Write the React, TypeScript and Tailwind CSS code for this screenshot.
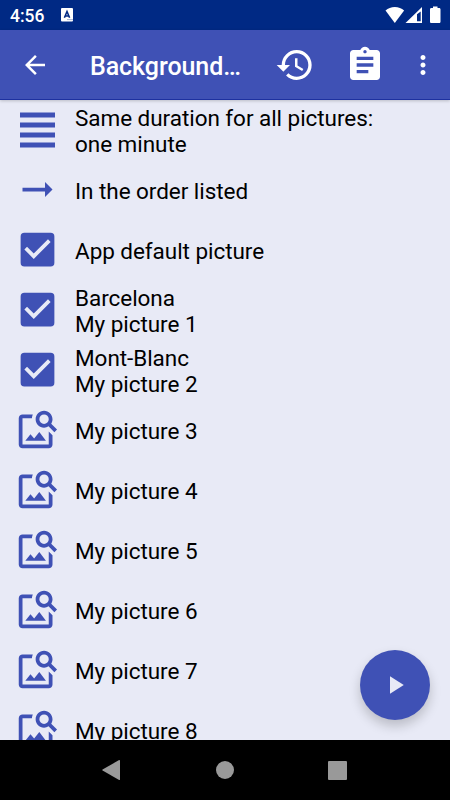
import type { ReactNode } from "react";
import {
  MdArrowBack,
  MdArrowRightAlt,
  MdAssignment,
  MdCheckBox,
  MdHistory,
  MdImageSearch,
  MdMoreVert,
  MdPlayArrow,
} from "react-icons/md";

interface Item {
  icon: ReactNode;
  lines: string[];
}

function DurationIcon() {
  return (
    <svg width="45" height="45" viewBox="0 0 45 45" fill="currentColor">
      <path d="M5 5.500h35v5H5zM5 15.500h35v5H5zM5 25.500h35v5H5zM5 35.500h35v5H5z" />
    </svg>
  );
}

const checked = <MdCheckBox size={45} />;
const search = <MdImageSearch size={45} />;

const items: Item[] = [
  {
    icon: <DurationIcon />,
    lines: ["Same duration for all pictures:", "one minute"],
  },
  { icon: <MdArrowRightAlt size={45} />, lines: ["In the order listed"] },
  { icon: checked, lines: ["App default picture"] },
  { icon: checked, lines: ["Barcelona", "My picture 1"] },
  { icon: checked, lines: ["Mont-Blanc", "My picture 2"] },
  { icon: search, lines: ["My picture 3"] },
  { icon: search, lines: ["My picture 4"] },
  { icon: search, lines: ["My picture 5"] },
  { icon: search, lines: ["My picture 6"] },
  { icon: search, lines: ["My picture 7"] },
  { icon: search, lines: ["My picture 8"] },
];

function StatusBar() {
  return (
    <div className="h-[30px] shrink-0 bg-[#002984] flex items-center pl-[10px] pr-[9px] text-white">
      <span className="text-[17.5px] font-medium leading-[30px] pt-px">4:56</span>
      <svg className="ml-[17px]" width="12" height="14" viewBox="0 0 12 14">
        <rect width="12" height="13.500" rx="1" fill="white" />
        <path
          d="M3.400 9.800 6 3.500 8.600 9.800M4.300 8H7.700"
          fill="none"
          stroke="#002984"
          strokeWidth="1.6"
        />
        <path d="M6.500 11.600h5" stroke="#002984" strokeDasharray="1 1" strokeWidth="0.700" />
      </svg>
      <svg className="ml-auto" width="56" height="18" viewBox="0 0 56 18" fill="white">
        <path d="M9.800 17 .5 4.600C3 2.300 6.200 1 9.800 1s6.800 1.300 9.300 3.600z" />
        <path
          fillRule="evenodd"
          d="M37 1v16H20.500zM35.700 5.500v9.700H32V8.300z"
        />
        <path d="M48 .5h4.500V2h1.700c.7 0 1.300.6 1.300 1.300v12.400c0 .7-.6 1.300-1.300 1.300h-7.900c-.7 0-1.300-.6-1.300-1.300V3.300c0-.7.6-1.300 1.300-1.300H48z" />
      </svg>
    </div>
  );
}

function Toolbar() {
  return (
    <header className="relative z-10 h-[70px] shrink-0 bg-[#3f51b5] shadow-[inset_0_-1px_0_#1d31a0,0_1px_3px_rgba(0,0,0,0.2)] flex items-center pl-5 text-white">
      <button aria-label="Back">
        <MdArrowBack size={30} />
      </button>
      <h1 className="ml-10 w-[152px] pt-[3px] text-[25px] leading-[30px] font-medium tracking-[-0.07px] whitespace-nowrap">
        Background…
      </h1>
      <button aria-label="History" className="ml-[33px]">
        <MdHistory size={40} />
      </button>
      <button aria-label="Clipboard" className="ml-[30px]">
        <MdAssignment size={40} />
      </button>
      <button aria-label="More" className="ml-[22.500px]">
        <MdMoreVert size={30} />
      </button>
    </header>
  );
}

function Row({ icon, lines }: Item) {
  return (
    <li className="h-[60px] shrink-0 flex items-center pl-[15px]">
      <span className="mb-px text-[#3f51b5]">{icon}</span>
      <div className="ml-[15px] pt-px text-[22.5px] leading-[26px] tracking-[-0.05px] text-black">
        {lines.map((line) => (
          <p key={line}>{line}</p>
        ))}
      </div>
    </li>
  );
}

function NavigationBar() {
  return (
    <nav className="h-[60px] shrink-0 bg-black text-[#999999] flex items-center pl-[102px]">
      <svg width="18" height="20" viewBox="0 0 18 20" fill="currentColor">
        <path d="M18 .6v18.800c0 .5-.5.7-.9.5L.6 10.600c-.5-.3-.5-.9 0-1.200L17.100.1c.4-.2.9 0 .9.5z" />
      </svg>
      <span className="ml-24 size-[18px] rounded-full bg-current" />
      <span className="ml-[94px] size-[19px] rounded-[1px] bg-current" />
    </nav>
  );
}

export default function App() {
  return (
    <div className="relative w-[450px] h-[800px] overflow-hidden flex flex-col bg-[#e8eaf6] font-[Roboto,sans-serif]">
      <StatusBar />
      <Toolbar />
      <ul className="flex-1 min-h-0 overflow-hidden flex flex-col">
        {items.map((item) => (
          <Row key={item.lines.join()} {...item} />
        ))}
      </ul>
      <NavigationBar />
      <button
        aria-label="Play"
        className="absolute right-5 bottom-20 size-[70px] rounded-full bg-[#3f51b5] text-[#e8eaf6] flex items-center justify-center shadow-[0_6px_12px_rgba(0,0,0,0.2)]"
      >
        <MdPlayArrow size={30} />
      </button>
    </div>
  );
}
